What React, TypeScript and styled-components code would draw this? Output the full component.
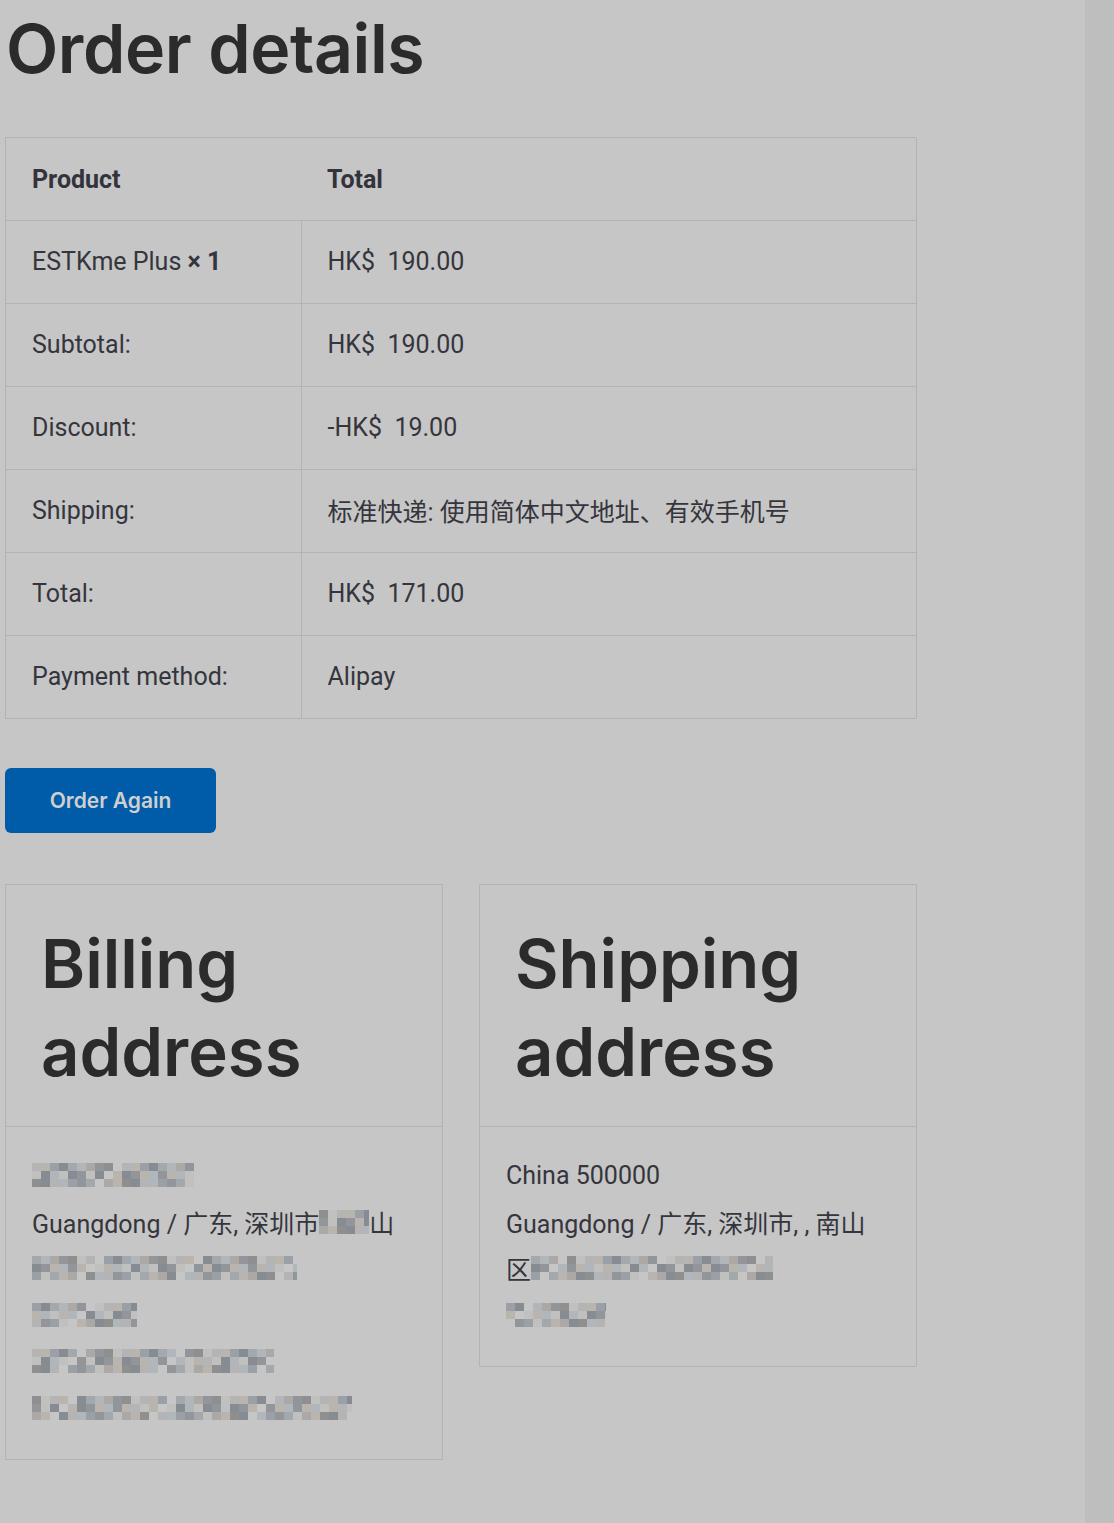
import React from 'react';
import styled, { createGlobalStyle } from 'styled-components';

const GlobalStyle = createGlobalStyle`
  html, body {
    margin: 0;
    padding: 0;
    background: #c6c6c6;
  }
  body {
    font-family: Roboto, "Noto Sans CJK SC", sans-serif;
    color: #35353d;
  }
`;

type Row = { label: string; value: React.ReactNode; strong?: boolean };

const rows: Row[] = [
  { label: 'ESTKme Plus', value: 'HK$\u00a0 190.00', strong: true },
  { label: 'Subtotal:', value: 'HK$\u00a0 190.00' },
  { label: 'Discount:', value: '-HK$\u00a0 19.00' },
  { label: 'Shipping:', value: '标准快递: 使用简体中文地址、有效手机号' },
  { label: 'Total:', value: 'HK$\u00a0 171.00' },
  { label: 'Payment method:', value: 'Alipay' },
];

// deterministic grey tiles to stand in for the pixelated (redacted) text
const tones = ['#9da3a8', '#8a8d92', '#b1b2b3', '#7d8189', '#a7a3a0', '#c0bfbe', '#949aa1', '#aeb4b9', '#868686', '#b8b1ab'];

const Mosaic = ({ width, seed = 1 }: { width: number; seed?: number }) => {
  const cols = Math.ceil(width / 9);
  const cells: JSX.Element[] = [];
  for (let r = 0; r < 3; r++) {
    for (let c = 0; c < cols; c++) {
      const n = (c * 7 + r * 13 + seed * 5 + ((c * r + seed) % 4)) % tones.length;
      if ((c + r + seed) % 11 === 0) continue;
      cells.push(<rect key={`${r}-${c}`} x={c * 9} y={r * 8} width={9} height={8} fill={tones[n]} />);
    }
  }
  return (
    <MosaicSvg width={width} height={24} viewBox={`0 0 ${width} 24`}>
      {cells}
    </MosaicSvg>
  );
};

const App = () => (
  <>
    <GlobalStyle />
    <Shell>
      <Main>
        <Title>Order details</Title>
        <OrderTable>
          <thead>
            <tr>
              <HeadCell>Product</HeadCell>
              <HeadCell>Total</HeadCell>
            </tr>
          </thead>
          <tbody>
            {rows.map((row) => (
              <tr key={row.label}>
                <LabelCell>
                  {row.label}
                  {row.strong && <Qty> × 1</Qty>}
                </LabelCell>
                <ValueCell>{row.value}</ValueCell>
              </tr>
            ))}
          </tbody>
        </OrderTable>

        <AgainButton>Order Again</AgainButton>

        <Addresses>
          <AddressCard>
            <CardHead>
              <CardTitle>Billing address</CardTitle>
            </CardHead>
            <CardBody>
              <Line><Mosaic width={162} seed={2} /></Line>
              <Line>Guangdong / 广东, 深圳市<Mosaic width={50} seed={3} />山</Line>
              <Line><Mosaic width={265} seed={4} /></Line>
              <Line><Mosaic width={105} seed={5} /></Line>
              <Line><Mosaic width={242} seed={6} /></Line>
              <Line><Mosaic width={320} seed={7} /></Line>
            </CardBody>
          </AddressCard>

          <AddressCard>
            <CardHead>
              <CardTitle>Shipping address</CardTitle>
            </CardHead>
            <CardBody>
              <Line>China 500000</Line>
              <Line>Guangdong / 广东, 深圳市, , 南山</Line>
              <Line>区<Mosaic width={242} seed={8} /></Line>
              <Line><Mosaic width={100} seed={9} /></Line>
            </CardBody>
          </AddressCard>
        </Addresses>
      </Main>
      <SideStrip />
    </Shell>
  </>
);

export default App;

const Shell = styled.div`
  display: grid;
  grid-template-columns: 1fr 29px;
  min-height: 1523px;
`;

const Main = styled.main`
  padding: 0 0 60px 5px;
  width: 912px;
`;

const SideStrip = styled.div`
  background: #bebebe;
`;

const Title = styled.h1`
  margin: 0;
  padding: 8px 0 0 1px;
  font-family: Inter, "Liberation Sans", sans-serif;
  font-weight: 600;
  font-size: 68px;
  line-height: 80px;
  letter-spacing: -0.4px;
  color: #2b2b2b;
`;

const OrderTable = styled.table`
  margin-top: 49px;
  width: 912px;
  border-collapse: collapse;
  border: 1px solid #b3b3b3;
  font-size: 25px;

  tr {
    height: 83px;
  }
  tbody tr {
    border-top: 1px solid #b3b3b3;
  }
`;

const HeadCell = styled.th`
  text-align: left;
  padding: 0 26px;
  font-weight: 700;
  color: #33333d;

  &:first-child {
    width: 243px;
  }
`;

const LabelCell = styled.td`
  padding: 0 26px 2px;
  border-right: 1px solid #b3b3b3;
  color: #35353d;
`;

const Qty = styled.strong`
  font-weight: 700;
`;

const ValueCell = styled.td`
  padding: 0 26px 2px;
  color: #35353d;
`;

const AgainButton = styled.button`
  display: block;
  margin-top: 49px;
  width: 211px;
  height: 65px;
  border: none;
  border-radius: 6px;
  background: #005ca8;
  color: #cfcfcf;
  font-family: Inter, "Liberation Sans", sans-serif;
  font-weight: 600;
  font-size: 21px;
  cursor: pointer;
`;

const Addresses = styled.div`
  margin-top: 51px;
  display: grid;
  grid-template-columns: 1fr 1fr;
  column-gap: 36px;
  align-items: start;
`;

const AddressCard = styled.section`
  border: 1px solid #b3b3b3;
`;

const CardHead = styled.div`
  height: 242px;
  box-sizing: border-box;
  padding: 35px 35px 0;
  border-bottom: 1px solid #b3b3b3;
`;

const CardTitle = styled.h2`
  margin: 0;
  font-family: Inter, "Liberation Sans", sans-serif;
  font-weight: 600;
  font-size: 67px;
  line-height: 88px;
  color: #2b2b2b;
`;

const CardBody = styled.address`
  font-style: normal;
  padding: 25px 26px 28px;
  font-size: 25px;
  color: #35353d;
`;

const Line = styled.div`
  display: flex;
  align-items: center;
  height: 46.5px;
  white-space: nowrap;
`;

const MosaicSvg = styled.svg`
  display: block;
  flex: none;
  opacity: 0.85;
`;
